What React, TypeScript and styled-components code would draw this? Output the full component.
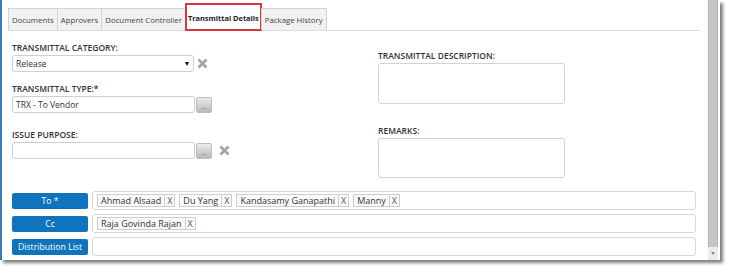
import React from 'react';
import styled, { createGlobalStyle } from 'styled-components';

const Global = createGlobalStyle`
  html, body { margin: 0; padding: 0; background: #fff; }
  body { font-family: "Open Sans", "Liberation Sans", sans-serif; color: #333; }
`;

const Page = styled.div`
  width: 732px;
  height: 273px;
  background: #fff;
  overflow: hidden;
`;

const Window = styled.div`
  display: flex;
  width: 720px;
  height: 260px;
  box-sizing: border-box;
  background: #fff;
  border-left: 2px solid #3a7bb5;
  padding-right: 2px;
  box-shadow: 3px 3px 3px rgba(0, 0, 0, 0.5);
`;

const Content = styled.div`
  flex: 1;
  display: flex;
  flex-direction: column;
  padding: 8px 8px 0 6px;
  min-width: 0;
`;

const TabBar = styled.div`
  display: flex;
  align-items: flex-end;
  height: 22px;
  border-bottom: 1px solid #dcdcdc;
`;

const Tab = styled.div<{ $active?: boolean }>`
  box-sizing: border-box;
  height: ${(p) => (p.$active ? '28px' : '22px')};
  margin-bottom: ${(p) => (p.$active ? '-1px' : '0')};
  margin-left: -1px;
  padding: 0 ${(p) => (p.$active ? '1px' : '3px')};
  display: flex;
  align-items: center;
  padding-top: ${(p) => (p.$active ? '2px' : '0')};
  font-size: ${(p) => (p.$active ? '7.4px' : '7.8px')};
  font-weight: ${(p) => (p.$active ? 700 : 400)};
  color: ${(p) => (p.$active ? '#222' : '#444')};
  background: ${(p) => (p.$active ? '#fff' : '#f1f1f1')};
  border: ${(p) => (p.$active ? '2px solid #d2383b' : '1px solid #d3d3d3')};
  border-bottom: ${(p) => (p.$active ? '2px solid #d2383b' : 'none')};
  white-space: nowrap;
  &:first-child { margin-left: 0; }
`;

const Body = styled.div`
  display: flex;
  flex-direction: column;
  padding: 0 4px;
`;

const FormGrid = styled.div`
  display: grid;
  grid-template-columns: 366px 187px;
  align-items: start;
`;

const Column = styled.div<{ $top: number }>`
  display: flex;
  flex-direction: column;
  padding-top: ${(p) => p.$top}px;
`;

const Field = styled.div<{ $gap?: number }>`
  display: flex;
  flex-direction: column;
  margin-top: ${(p) => p.$gap ?? 0}px;
`;

const Label = styled.div`
  font-size: 8.5px;
  font-weight: 600;
  line-height: 11px;
  height: 11px;
  margin-bottom: 2px;
  color: #333;
  white-space: nowrap;
`;

const ControlRow = styled.div`
  display: flex;
  align-items: center;
`;

const Select = styled.div`
  box-sizing: border-box;
  width: 182px;
  height: 17px;
  border: 1px solid #cfcfcf;
  border-radius: 3px;
  display: flex;
  align-items: center;
  justify-content: space-between;
  padding: 0 4px 0 3px;
  font-size: 8.5px;
  color: #333;
`;

const Caret = styled.span`
  width: 0;
  height: 0;
  border-left: 2.5px solid transparent;
  border-right: 2.5px solid transparent;
  border-top: 4px solid #111;
`;

const TextInput = styled.div`
  box-sizing: border-box;
  width: 183px;
  height: 17px;
  border: 1px solid #cfcfcf;
  border-radius: 3px;
  display: flex;
  align-items: center;
  padding: 0 3px;
  font-size: 8.5px;
  color: #333;
`;

const DotsButton = styled.div`
  box-sizing: border-box;
  width: 16px;
  height: 16px;
  margin-left: 1px;
  border: 1px solid #bdbdbd;
  border-radius: 2px;
  background: linear-gradient(#ececec, #b9b9b9);
  display: flex;
  align-items: flex-end;
  justify-content: center;
  font-size: 7px;
  line-height: 10px;
  color: #666;
`;

const ClearIcon = styled.svg<{ $gap: number }>`
  width: 11px;
  height: 11px;
  margin-left: ${(p) => p.$gap}px;
  flex: none;
`;

const TextArea = styled.div<{ $h: number }>`
  box-sizing: border-box;
  width: 187px;
  height: ${(p) => p.$h}px;
  border: 1px solid #d2d2d2;
  border-radius: 3px;
`;

const Recipients = styled.div`
  display: flex;
  flex-direction: column;
  gap: 4px;
  margin-top: 13px;
`;

const RecRow = styled.div`
  display: flex;
  align-items: center;
  gap: 4px;
  height: 19px;
`;

const BlueButton = styled.div`
  width: 76px;
  height: 16px;
  flex: none;
  background: #0e74bd;
  border-radius: 2px;
  color: #fff;
  font-size: 8.7px;
  display: flex;
  align-items: center;
  justify-content: center;
  white-space: nowrap;
`;

const RecField = styled.div`
  box-sizing: border-box;
  flex: 1;
  height: 19px;
  border: 1px solid #d8d8d8;
  border-radius: 3px;
  display: flex;
  align-items: center;
  gap: 4px;
  padding-left: 4px;
`;

const Chip = styled.div`
  box-sizing: border-box;
  height: 13px;
  display: flex;
  align-items: stretch;
  border: 1px solid #cdcdcd;
  background: #fafafa;
  font-size: 9px;
  color: #333;
  line-height: 11px;
  white-space: nowrap;
`;

const ChipText = styled.span`
  padding: 0 3px;
`;

const ChipX = styled.span`
  border-left: 1px solid #cdcdcd;
  padding: 0 2px;
  color: #555;
`;

const Scrollbar = styled.div`
  width: 10px;
  flex: none;
  display: flex;
  flex-direction: column;
  background: #ececec;
`;

const Thumb = styled.div`
  flex: 1;
  box-sizing: border-box;
  background: #c6c6c6;
  border-left: 1px solid #b4b4b4;
  border-right: 1px solid #b4b4b4;
`;

const ArrowBox = styled.div`
  height: 13px;
  display: flex;
  align-items: center;
  justify-content: center;
  &::after {
    content: '';
    border-left: 2.5px solid transparent;
    border-right: 2.5px solid transparent;
    border-top: 3px solid #8a8a8a;
  }
`;

const XMark = ({ gap }: { gap: number }) => (
  <ClearIcon $gap={gap} viewBox="0 0 11 11">
    <path d="M1.5 1.5 L9.5 9.5 M9.5 1.5 L1.5 9.5" stroke="#a3a3a3" strokeWidth="2.6" />
  </ClearIcon>
);

const tabs = ['Documents', 'Approvers', 'Document Controller', 'Transmittal Details', 'Package History'];
const toList = ['Ahmad Alsaad', 'Du Yang', 'Kandasamy Ganapathi', 'Manny'];
const ccList = ['Raja Govinda Rajan'];

const Chips = ({ names }: { names: string[] }) => (
  <>
    {names.map((n) => (
      <Chip key={n}>
        <ChipText>{n}</ChipText>
        <ChipX>X</ChipX>
      </Chip>
    ))}
  </>
);

export default function App() {
  return (
    <Page>
      <Global />
      <Window>
        <Content>
          <TabBar>
            {tabs.map((t) => (
              <Tab key={t} $active={t === 'Transmittal Details'}>
                {t}
              </Tab>
            ))}
          </TabBar>
          <Body>
            <FormGrid>
              <Column $top={11}>
                <Field>
                  <Label>TRANSMITTAL CATEGORY:</Label>
                  <ControlRow>
                    <Select>
                      <span>Release</span>
                      <Caret />
                    </Select>
                    <XMark gap={3} />
                  </ControlRow>
                </Field>
                <Field $gap={11}>
                  <Label>TRANSMITTAL TYPE:*</Label>
                  <ControlRow>
                    <TextInput>TRX - To Vendor</TextInput>
                    <DotsButton>...</DotsButton>
                  </ControlRow>
                </Field>
                <Field $gap={16}>
                  <Label>ISSUE PURPOSE:</Label>
                  <ControlRow>
                    <TextInput />
                    <DotsButton>...</DotsButton>
                    <XMark gap={7} />
                  </ControlRow>
                </Field>
              </Column>
              <Column $top={19}>
                <Field>
                  <Label>TRANSMITTAL DESCRIPTION:</Label>
                  <TextArea $h={41} />
                </Field>
                <Field $gap={21}>
                  <Label>REMARKS:</Label>
                  <TextArea $h={40} />
                </Field>
              </Column>
            </FormGrid>
            <Recipients>
              <RecRow>
                <BlueButton>To *</BlueButton>
                <RecField>
                  <Chips names={toList} />
                </RecField>
              </RecRow>
              <RecRow>
                <BlueButton>Cc</BlueButton>
                <RecField>
                  <Chips names={ccList} />
                </RecField>
              </RecRow>
              <RecRow>
                <BlueButton>Distribution List</BlueButton>
                <RecField />
              </RecRow>
            </Recipients>
          </Body>
        </Content>
        <Scrollbar>
          <Thumb />
          <ArrowBox />
        </Scrollbar>
      </Window>
    </Page>
  );
}
